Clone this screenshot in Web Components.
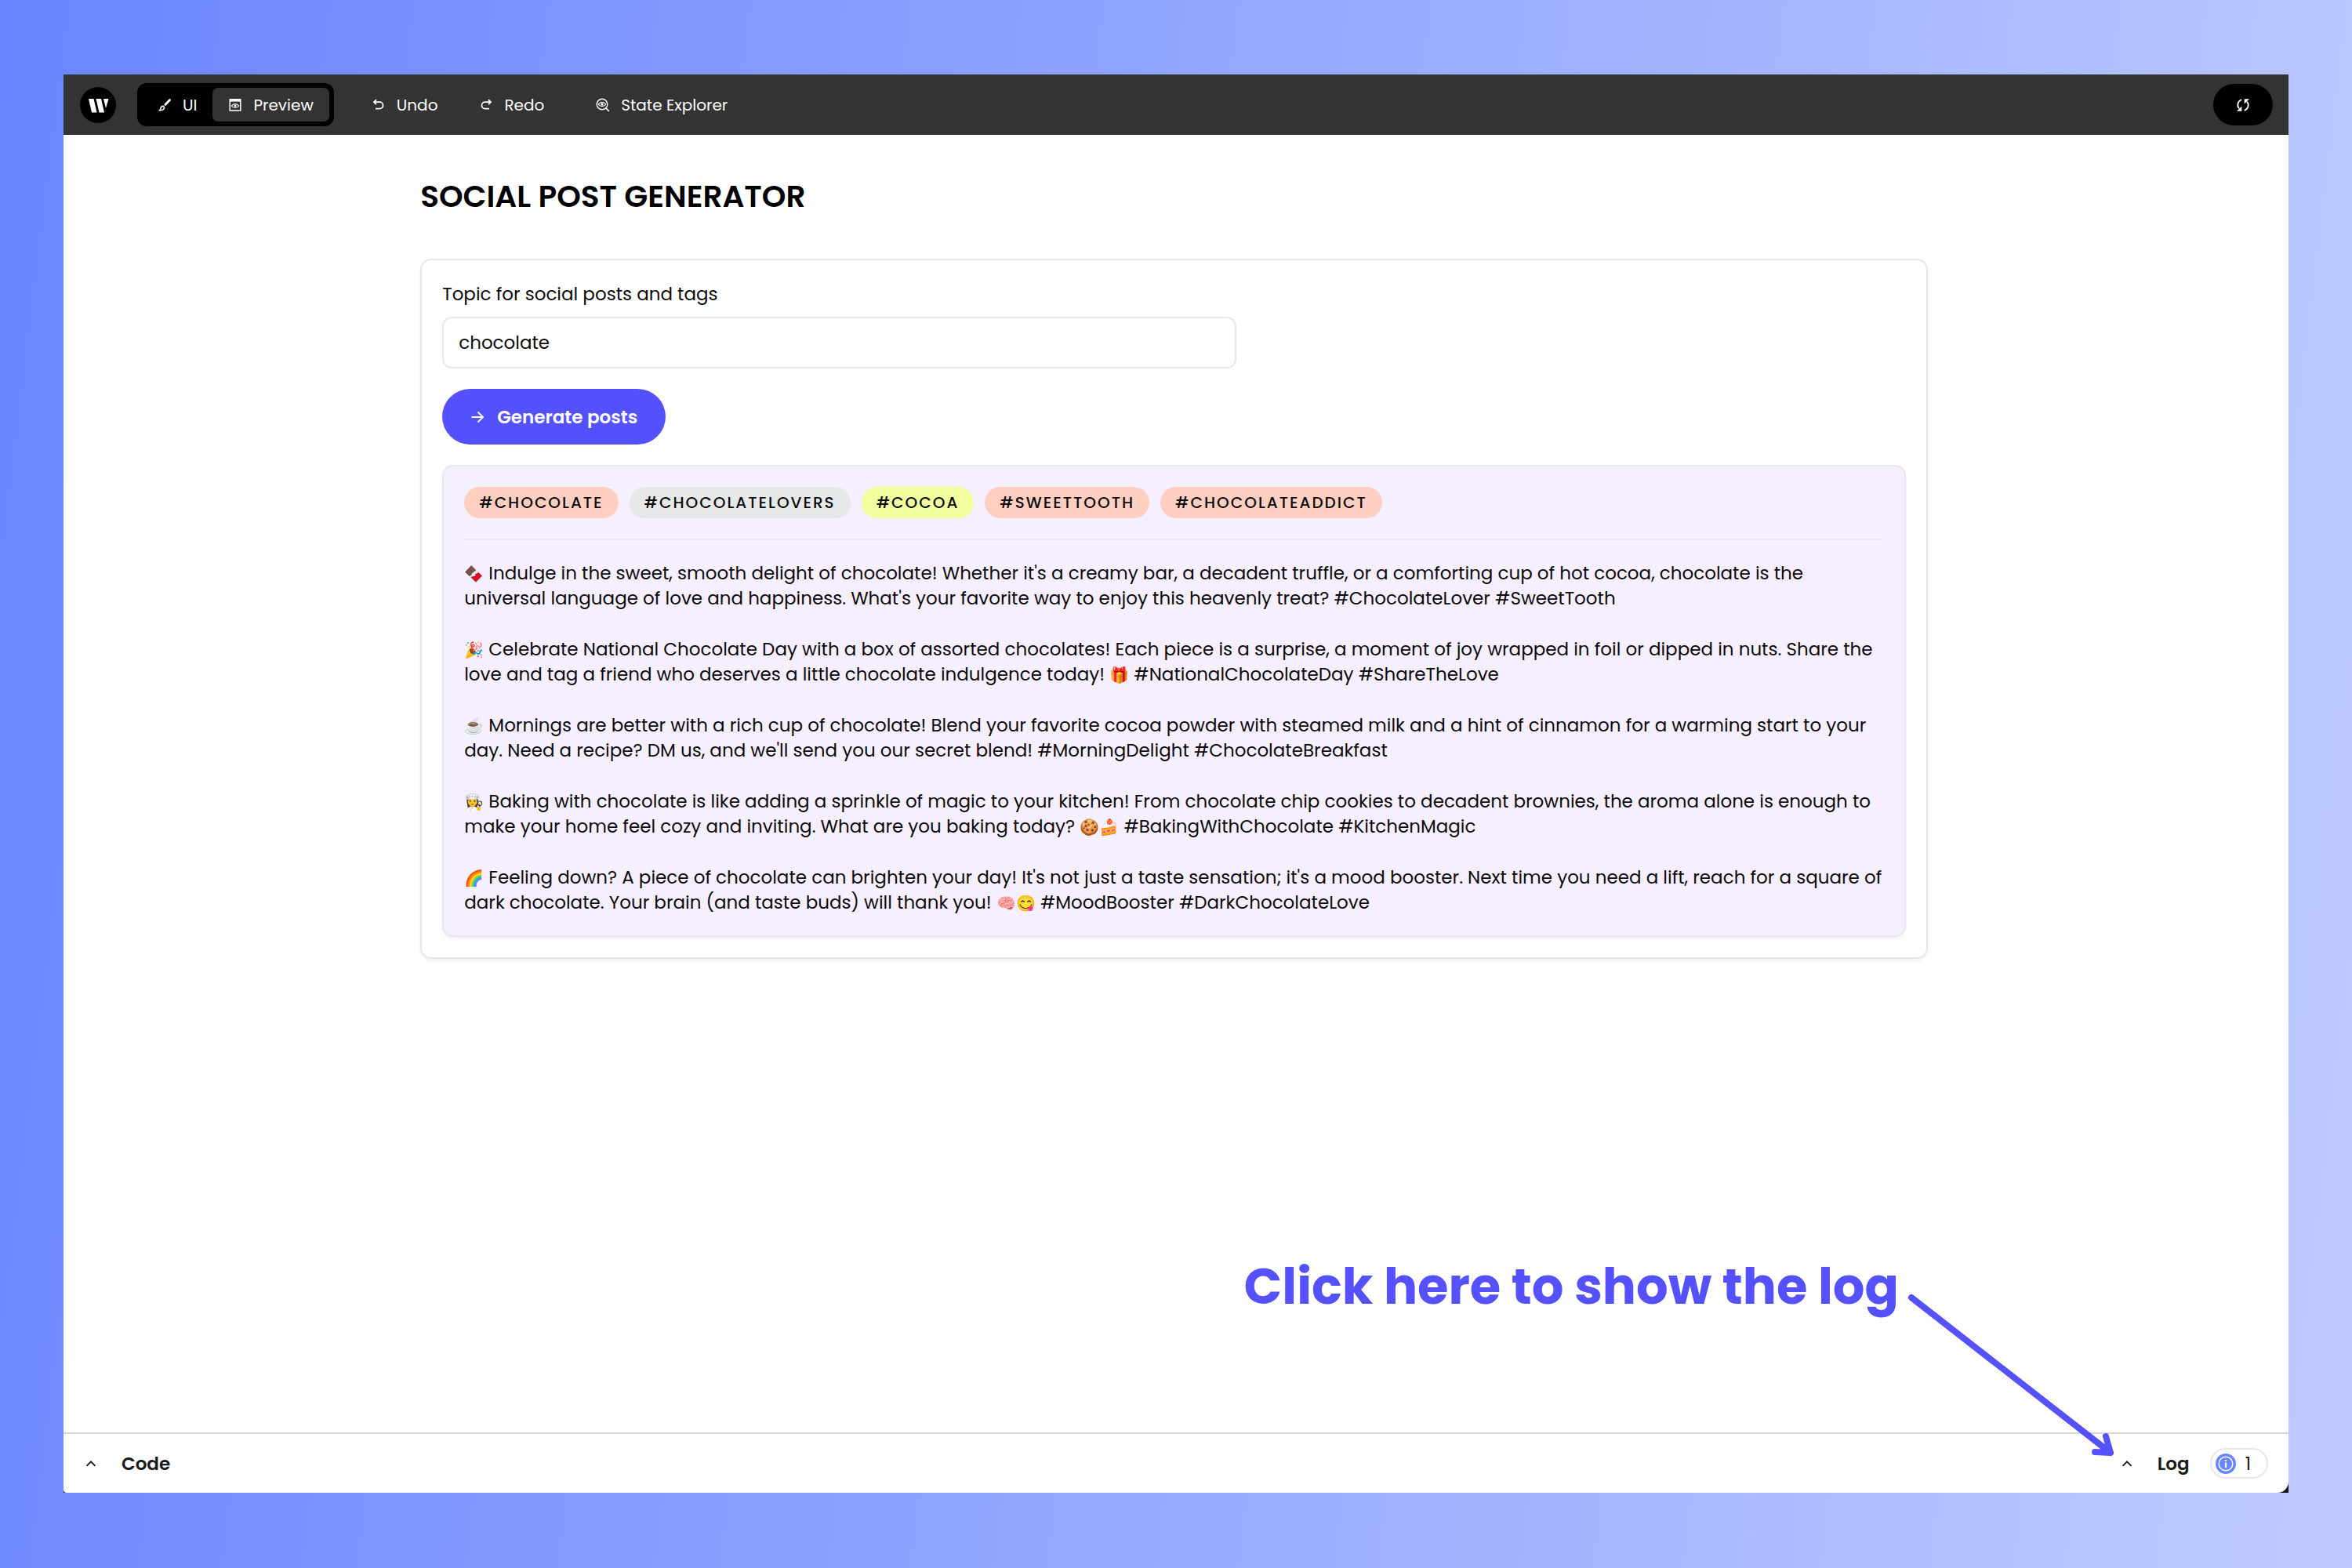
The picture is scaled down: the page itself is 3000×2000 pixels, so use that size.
<!DOCTYPE html>
<html lang="en">
<head>
<meta charset="utf-8">
<title>Social Post Generator</title>
<style>
  html, body { margin: 0; }
  body { font-family: Poppins, Inter, "Noto Sans", sans-serif; color: #0b0b0b; }
</style>
</head>
<body>
<app-stage>
  <app-window>
    <app-toolbar slot="toolbar"></app-toolbar>
    <post-generator></post-generator>
    <panel-bar slot="panels"></panel-bar>
  </app-window>
  <click-hint slot="hint">Click here to show the log</click-hint>
</app-stage>

<script>
const define = (name, html, setup) => {
  const template = document.createElement('template');
  template.innerHTML = '<style>*{box-sizing:border-box}button{font:inherit;color:inherit;border:0;background:none;padding:0;margin:0;cursor:pointer}svg{display:block;flex:none}</style>' + html;
  customElements.define(name, class extends HTMLElement {
    constructor() {
      super();
      this.attachShadow({ mode: 'open' }).append(template.content.cloneNode(true));
      if (setup) setup(this);
    }
  });
};

const icons = {
  brush: '<path d="M15.600 2.600 9.800 8.400" fill="none" stroke="currentColor" stroke-width="2.800" stroke-linecap="round"/><path d="M6.600 10.400c1.200 0 2 .9 1.900 2.100-.3 1.900-2.400 3.300-5.700 3.100 1-.9.9-1.900 1.300-3 .4-1.300 1.300-2.100 2.500-2.200z" fill="none" stroke="currentColor" stroke-width="1.600"/>',
  preview: '<path d="M2 1h14v3.600H2z" fill="currentColor"/><path d="M2.200 1.700h13.600v14.200H2.200z" fill="none" stroke="currentColor" stroke-width="1.500"/><path d="M4.300 10c2.300-3.300 7.100-3.300 9.400 0-2.300 3.300-7.100 3.300-9.400 0z" fill="none" stroke="currentColor" stroke-width="1.200"/><circle cx="9" cy="10" r="1.600" fill="currentColor"/>',
  undo: '<path d="M6 2.200 3 5.200l3 3M3.300 5.200h7a4.200 4.200 0 0 1 0 8.400H5" fill="none" stroke="currentColor" stroke-width="1.800"/>',
  redo: '<path d="m12 2.200 3 3-3 3M14.700 5.200h-7a4.200 4.200 0 0 0 0 8.400H13" fill="none" stroke="currentColor" stroke-width="1.800"/>',
  explorer: '<circle cx="8" cy="8" r="6.800" fill="none" stroke="currentColor" stroke-width="1.500"/><path d="m12.800 12.800 4 4" stroke="currentColor" stroke-width="1.800"/><path d="M3.200 8c2.300-3.500 7.300-3.500 9.600 0-2.300 3.500-7.300 3.500-9.600 0z" fill="none" stroke="currentColor" stroke-width="1.200"/><circle cx="8" cy="8" r="1.700" fill="currentColor"/>',
  sync: '<path d="M7.200 2C2.300 4 .8 9.500 3.900 13.300" fill="none" stroke="currentColor" stroke-width="1.800"/><path d="M1 16.800h6.300v-6.300z" fill="currentColor"/><path d="M10.800 16c4.900-2 6.400-7.500 3.300-11.300" fill="none" stroke="currentColor" stroke-width="1.800"/><path d="M17 1.200h-6.300v6.300z" fill="currentColor"/>',
  arrow: '<path d="M1.500 9h14M9.500 2.500 16 9l-6.500 6.500" fill="none" stroke="currentColor" stroke-width="1.800"/>',
  chevron: '<path d="m3.500 11.800 5.500-5.500 5.500 5.500" fill="none" stroke="currentColor" stroke-width="1.900"/>',
  info: '<circle cx="9" cy="9" r="9" fill="#6b86ff"/><circle cx="9" cy="9" r="6.100" fill="none" stroke="#fff" stroke-width="1"/><path d="M8.300 5.500h1.500v1.500H8.300zM8.300 7.900h1.500v4.500H8.300z" fill="#fff"/>'
};

define('ui-icon', '<style>:host{display:block;flex:none;width:18px;height:18px}svg{width:100%;height:100%}</style><svg viewBox="0 0 18 18" aria-hidden="true"></svg>',
  el => { el.shadowRoot.querySelector('svg').innerHTML = icons[el.getAttribute('name')] || ''; });

define('app-stage', `<style>
  :host{display:flex;flex-direction:column;position:relative;box-sizing:border-box;min-height:100vh;padding:95px 81px 96px;
    background:linear-gradient(97deg,#6985ff 0%,#bfcbff 100%)}
  ::slotted(app-window){flex:1}
</style><slot></slot><slot name="hint"></slot>`);

define('app-window', `<style>
  :host{display:flex;flex-direction:column;background:#111}
  .page{flex:1;display:flex;flex-direction:column;background:#fff;border-radius:0 0 14px 4px}
  main{flex:1;padding:0 16.2% 0 16.04%}
</style><slot name="toolbar"></slot><div class="page"><main><slot></slot></main><slot name="panels"></slot></div>`);

define('app-toolbar', `<style>
  :host{display:block;background:#333;color:#fff;font-size:20px;line-height:28px}
  header{display:flex;align-items:center;height:77px;padding:0 20px 0 21px}
  .logo{width:46px;height:46px;margin-right:27px}
  .modes{display:flex;padding:6px;background:#000;border-radius:12px}
  button{display:flex;align-items:center;gap:14px}
  .modes button{height:43px;padding:0 20px;border-radius:7px}
  .modes button[aria-pressed=true]{background:#333}
  .history{display:flex;gap:53px;margin:0 66px 0 48px}
  .sync{margin-left:auto;width:76px;height:53px;border-radius:27px;background:#000;justify-content:center}
</style>
<header>
  <svg class="logo" viewBox="0 0 46 46" role="img" aria-label="Writer"><circle cx="23" cy="23" r="23"/><path d="M11 15h6.500l4 17.500h-6.500zM20.500 15h6.500l4 17.500h-6.500zM30 15h6.500l-3.500 12z" fill="#fff"/></svg>
  <div class="modes">
    <button type="button" aria-pressed="false"><ui-icon name="brush"></ui-icon>UI</button>
    <button type="button" aria-pressed="true"><ui-icon name="preview"></ui-icon>Preview</button>
  </div>
  <div class="history">
    <button type="button"><ui-icon name="undo"></ui-icon>Undo</button>
    <button type="button"><ui-icon name="redo"></ui-icon>Redo</button>
  </div>
  <button type="button"><ui-icon name="explorer"></ui-icon>State Explorer</button>
  <button type="button" class="sync" aria-label="Sync"><ui-icon name="sync"></ui-icon></button>
</header>`);

define('tag-chip', `<style>
  :host{display:block;padding:0 19px;border-radius:20px;background:var(--chip,#ffcfc2);font-size:20px;font-weight:500;line-height:40px;letter-spacing:2px;white-space:nowrap}
</style><slot></slot>`);

define('post-item', `<style>
  :host{display:block;line-height:32px}
  p{margin:0}
</style><p><slot></slot></p>`);

define('post-generator', `<style>
  :host{display:block;font-size:23px;line-height:32px}
  h1{margin:0;padding:54px 0;font-size:39px;line-height:50px;font-weight:600;color:#000}
  .card{border:2px solid #e6e8f0;border-radius:14px;box-shadow:0 3px 4px #0000000d}
  .form{padding:26px;display:flex;flex-direction:column;align-items:flex-start}
  label{margin-bottom:12px;line-height:34px}
  input{width:1013px;max-width:100%;height:66px;margin-bottom:26px;padding:0 19px;border:2px solid #e6e8f0;border-radius:12px;background:#fff;font:inherit;color:inherit}
  .go{display:flex;align-items:center;gap:16px;height:71px;padding:0 36px;border-radius:36px;background:#5551ff;color:#fff;font-weight:600;margin-bottom:26px}
  .result{align-self:stretch;padding:26px;background:#f5efff}
  .tags{display:flex;flex-wrap:wrap;gap:14px;padding-bottom:26px;border-bottom:2px solid #e6e8f4;margin-bottom:26px}
  .posts{display:grid;gap:33px}
  .emoji{font-size:20px;line-height:20px}
</style>
<h1>SOCIAL POST GENERATOR</h1>
<section class="card form">
  <label for="topic">Topic for social posts and tags</label>
  <input id="topic" type="text" value="chocolate">
  <button type="button" class="go"><ui-icon name="arrow"></ui-icon>Generate posts</button>
  <div class="card result">
    <div class="tags">
      <tag-chip>#CHOCOLATE</tag-chip>
      <tag-chip style="--chip:#e6e9e8">#CHOCOLATELOVERS</tag-chip>
      <tag-chip style="--chip:#f1ff9f">#COCOA</tag-chip>
      <tag-chip>#SWEETTOOTH</tag-chip>
      <tag-chip>#CHOCOLATEADDICT</tag-chip>
    </div>
    <div class="posts">
      <post-item><span class="emoji">🍫</span> Indulge in the sweet, smooth delight of chocolate! Whether it's a creamy bar, a decadent truffle, or a comforting cup of hot cocoa, chocolate is the<br>universal language of love and happiness. What's your favorite way to enjoy this heavenly treat? #ChocolateLover #SweetTooth</post-item>
      <post-item><span class="emoji">🎉</span> Celebrate National Chocolate Day with a box of assorted chocolates! Each piece is a surprise, a moment of joy wrapped in foil or dipped in nuts. Share the<br>love and tag a friend who deserves a little chocolate indulgence today! <span class="emoji">🎁</span> #NationalChocolateDay #ShareTheLove</post-item>
      <post-item><span class="emoji">☕</span> Mornings are better with a rich cup of chocolate! Blend your favorite cocoa powder with steamed milk and a hint of cinnamon for a warming start to your<br>day. Need a recipe? DM us, and we'll send you our secret blend! #MorningDelight #ChocolateBreakfast</post-item>
      <post-item><span class="emoji">👩‍🍳</span> Baking with chocolate is like adding a sprinkle of magic to your kitchen! From chocolate chip cookies to decadent brownies, the aroma alone is enough to<br>make your home feel cozy and inviting. What are you baking today? <span class="emoji">🍪🍰</span> #BakingWithChocolate #KitchenMagic</post-item>
      <post-item><span class="emoji">🌈</span> Feeling down? A piece of chocolate can brighten your day! It's not just a taste sensation; it's a mood booster. Next time you need a lift, reach for a square of<br>dark chocolate. Your brain (and taste buds) will thank you! <span class="emoji">🧠😋</span> #MoodBooster #DarkChocolateLove</post-item>
    </div>
  </div>
</section>`);

define('panel-bar', `<style>
  :host{display:block;border-top:2px solid #d6d6d6;font-size:23px;line-height:32px;font-weight:600;color:#1a1a1a}
  footer{display:flex;align-items:center;justify-content:space-between;height:75px;padding:0 26px}
  button{display:flex;align-items:center;gap:26px}
  button>ui-icon{margin-right:4px}
  .badge{display:flex;align-items:center;gap:12px;height:39px;padding:0 20px 0 5px;border:2px solid #e6e8f0;border-radius:20px;font-weight:400}
  .badge ui-icon{width:26px;height:26px}
</style>
<footer>
  <button type="button"><ui-icon name="chevron"></ui-icon>Code</button>
  <button type="button"><ui-icon name="chevron"></ui-icon>Log<span class="badge"><ui-icon name="info"></ui-icon>1</span></button>
</footer>`);

define('click-hint', `<style>
  :host{position:absolute;right:298px;bottom:136px;display:flex;align-items:flex-start;gap:6px;color:#5551ff;font-size:64px;line-height:80px;font-weight:700;white-space:nowrap}
  svg{margin-top:47px}
</style><slot></slot><svg width="274" height="216" viewBox="0 0 274 216" fill="none" stroke="currentColor" stroke-width="8" stroke-linecap="round" stroke-linejoin="round" aria-hidden="true"><path d="M10 7 264 205M258 184l6 21-20-1"/></svg>`);
</script>
</body>
</html>
